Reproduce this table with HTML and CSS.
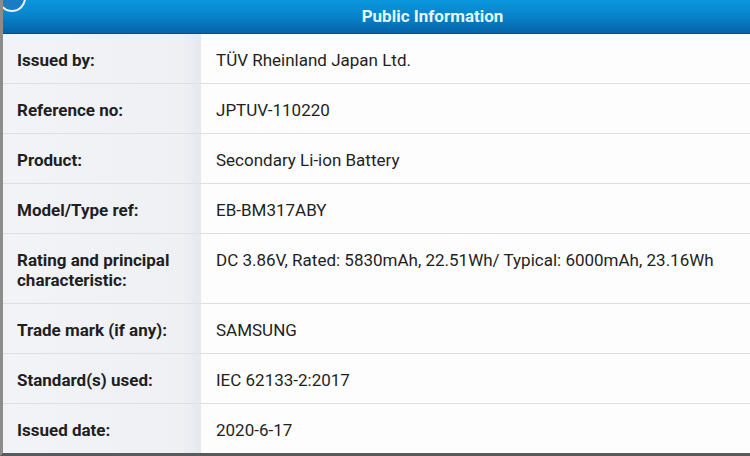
FILE: index.html
```html
<!DOCTYPE html>
<html lang="en">
<head>
    <meta charset="UTF-8">
    <meta name="viewport" content="width=device-width, initial-scale=1.0">
    <title>Public Information</title>
    <link rel="stylesheet" href="styles.css">
</head>
<body>
    <div class="sheet">
        <span class="badge"></span>
        <table class="info-table">
            <colgroup>
                <col class="label-col">
                <col>
            </colgroup>
            <thead>
                <tr>
                    <th colspan="2" class="title">Public Information</th>
                </tr>
            </thead>
            <tbody>
                <tr>
                    <td class="label">Issued by:</td>
                    <td class="value">TÜV Rheinland Japan Ltd.</td>
                </tr>
                <tr>
                    <td class="label">Reference no:</td>
                    <td class="value">JPTUV-110220</td>
                </tr>
                <tr>
                    <td class="label">Product:</td>
                    <td class="value">Secondary Li-ion Battery</td>
                </tr>
                <tr>
                    <td class="label">Model/Type ref:</td>
                    <td class="value">EB-BM317ABY</td>
                </tr>
                <tr>
                    <td class="label">Rating and principal characteristic:</td>
                    <td class="value">DC 3.86V, Rated: 5830mAh, 22.51Wh/ Typical: 6000mAh, 23.16Wh</td>
                </tr>
                <tr>
                    <td class="label">Trade mark (if any):</td>
                    <td class="value">SAMSUNG</td>
                </tr>
                <tr>
                    <td class="label">Standard(s) used:</td>
                    <td class="value">IEC 62133-2:2017</td>
                </tr>
                <tr>
                    <td class="label">Issued date:</td>
                    <td class="value">2020-6-17</td>
                </tr>
            </tbody>
        </table>
    </div>
</body>
</html>
```

FILE: styles.css
```css
body {
    margin: 0;
    background-color: #ffffff;
    font-family: Roboto, "Liberation Sans", Arial, sans-serif;
    color: #1f1f1f;
}
.sheet {
    position: relative;
    height: 453px;
    border-left: 3px solid #8c8c8c;
    border-bottom: 3px solid #5a5a5a;
    overflow: hidden;
}
.badge {
    position: absolute;
    left: -5px;
    top: -16px;
    width: 24px;
    height: 24px;
    border: 2px solid #e8f2fa;
    border-radius: 50%;
    background-color: #1a7cc4;
}
.info-table {
    width: 100%;
    border-collapse: collapse;
    table-layout: fixed;
}
.label-col {
    width: 198px;
}
.title {
    height: 31px;
    padding: 0 0 2px 112px;
    font-size: 17px;
    font-weight: bold;
    color: #e2f6ff;
    text-align: center;
    background: linear-gradient(to bottom, #0b97dc 0%, #0880c8 55%, #0662a8 100%);
    border-bottom: 1px solid #074f8a;
}
.info-table td {
    padding: 16px 0 13px 0;
    font-size: 17px;
    line-height: 20px;
    vertical-align: top;
    border-bottom: 1px solid #dedfe2;
}
.info-table tr:last-child td {
    border-bottom: none;
}
.label {
    padding-left: 14px !important;
    padding-right: 8px !important;
    font-weight: bold;
    background: linear-gradient(to right, #f2f3f6 0%, #eff0f4 90%, #e6e8ef 100%);
}
.value {
    padding-left: 15px !important;
    background-color: #fdfdfd;
}
```
